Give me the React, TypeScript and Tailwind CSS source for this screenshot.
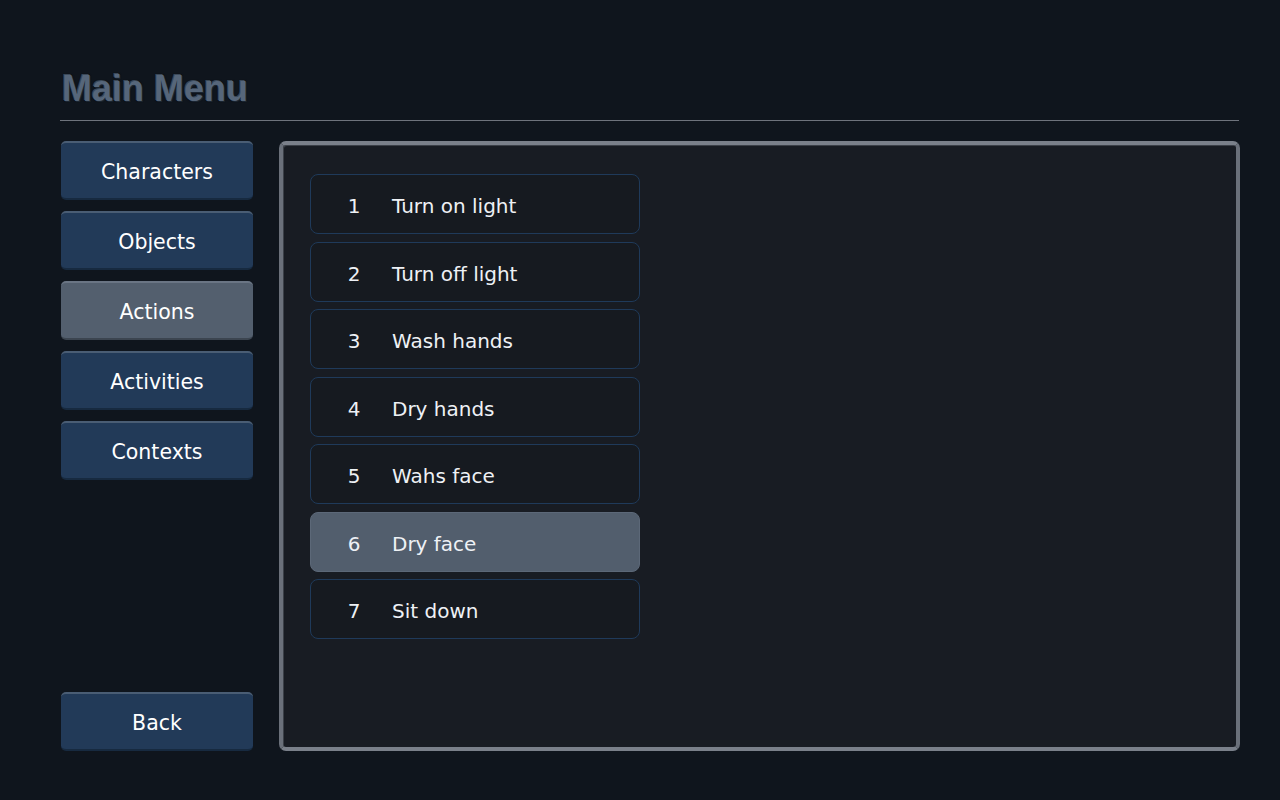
import React from "react";

const menu = ["Characters", "Objects", "Actions", "Activities", "Contexts"];
const items = [
  "Turn on light",
  "Turn off light",
  "Wash hands",
  "Dry hands",
  "Wahs face",
  "Dry face",
  "Sit down",
];

const font = { fontFamily: "'DejaVu Sans', 'Liberation Sans', sans-serif" };

function SideButton({ label, active }: { label: string; active?: boolean }) {
  return (
    <div
      className={
        "h-[59px] w-[192px] shrink-0 rounded-[5px] flex items-center justify-center pt-[3px] text-[20.5px] text-white border-t-2 border-b-2 " +
        (active
          ? "bg-[#535f6e] border-t-[#6a7584] border-b-[#3c4550]"
          : "bg-[#223a58] border-t-[#4a5d74] border-b-[#172a40]")
      }
      style={font}
    >
      {label}
    </div>
  );
}

export default function App() {
  return (
    <div className="w-[1280px] h-[800px] bg-[#0f151d] overflow-hidden flex flex-col pl-[60px] pr-[40px] pt-[71px]">
      <div
        className="text-[36px] font-bold text-[#56667a] leading-none pl-[2px] h-[42px]"
        style={{
          fontFamily: "'Liberation Sans', Arial, sans-serif",
          textShadow: "1px 1px 0 #1a2430, -1px -1px 0 #3a4858, 0 0 2px #000",
        }}
      >
        Main Menu
      </div>
      <div className="h-px bg-[#6e737c] w-[1179px] mt-[7px]" />
      <div className="flex mt-[20px] gap-[27px]">
        <div className="flex flex-col w-[192px] h-[610px] pl-px shrink-0">
          <div className="flex flex-col gap-[11px]">
            {menu.map((m) => (
              <SideButton key={m} label={m} active={m === "Actions"} />
            ))}
          </div>
          <div className="mt-auto">
            <SideButton label="Back" />
          </div>
        </div>
        <div className="w-[961px] h-[610px] shrink-0 rounded-[7px] border-[4px] border-t-[#7a808a] border-l-[#6a707a] border-r-[#6a707a] border-b-[#7a808a] bg-[#181c23] pt-[29px] pl-[27px] shadow-[inset_1px_1px_0_#3b4048]">
          <div className="flex flex-col gap-[7.5px] w-[330px]">
            {items.map((t, i) => (
              <div
                key={t}
                className={
                  "h-[60px] shrink-0 rounded-[8px] border flex items-center pt-[4px] text-[20px] text-[#eef1f5] " +
                  (i === 5
                    ? "bg-[#525e6d] border-[#5c6878]"
                    : "bg-[#161a20] border-[#1f3a5a]")
                }
                style={font}
              >
                <span className="w-[81px] pl-[5px] text-center">{i + 1}</span>
                <span>{t}</span>
              </div>
            ))}
          </div>
        </div>
      </div>
    </div>
  );
}
